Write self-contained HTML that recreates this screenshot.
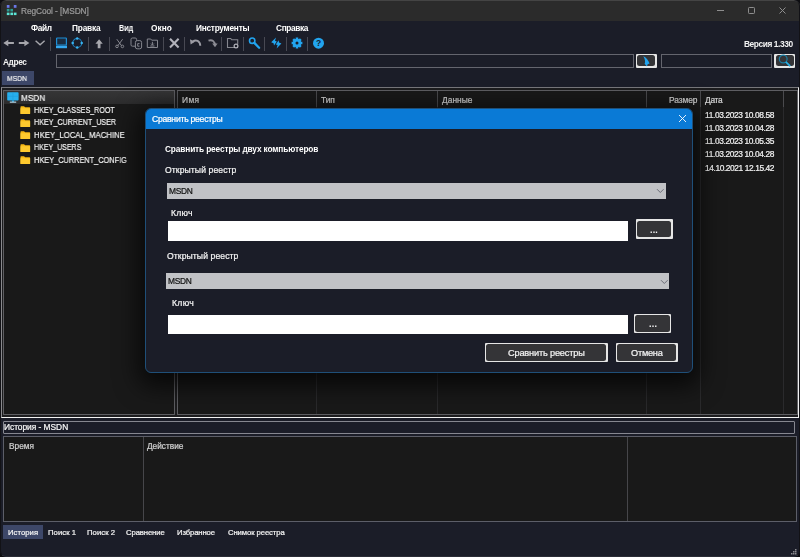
<!DOCTYPE html>
<html lang="ru">
<head>
<meta charset="utf-8">
<title>RegCool - [MSDN]</title>
<style>
*{box-sizing:border-box;margin:0;padding:0}
html,body{width:800px;height:557px;overflow:hidden}
html{background:#0d0d10}
body{font-family:"Liberation Sans","DejaVu Sans",sans-serif;font-size:9px;color:#f0f0f0;position:relative;background:#1b1d28;border-radius:6px}
.abs{position:absolute}
.t{position:absolute;white-space:nowrap;line-height:12px;height:12px;-webkit-text-stroke:0.22px currentColor;will-change:transform}
#titlebar{left:0;top:0;width:800px;height:20.700px;background:#2b2b2b;border-top:1px solid #444444;border-radius:6px 6px 0 0}
.sep{position:absolute;top:36.500px;width:1.200px;height:14.500px;background:#484953}
.inp{position:absolute;border:1px solid #64656e;background:#1b1d28}
.pane{position:absolute;background:#191919}
.vl{position:absolute;width:1px}
.fold{position:absolute;width:10.800px;height:8.200px}
.btn{position:absolute;background:#e6e6e6;border-radius:1px;padding:1.400px}
.btn i{display:block;width:100%;height:100%;background:#343437;border-radius:2.500px}
</style>
</head>
<body>
<!-- title bar -->
<div class="abs" style="left:0;top:0;width:800px;height:557px;border:1px solid #121216;border-top:none;border-bottom-color:#2a2c36;border-radius:6px;pointer-events:none;z-index:5"></div>
<div id="titlebar" class="abs"></div>
<svg class="abs" style="left:6px;top:4px" width="12" height="12" viewBox="0 0 12 12">
 <rect x="0.800" y="1" width="2.700" height="2.800" fill="#6a78e6"/>
 <rect x="7.800" y="1" width="2.700" height="2.800" fill="#6a78e6"/>
 <rect x="0.800" y="4.900" width="2.700" height="2.600" fill="#2c9c92"/>
 <rect x="4.400" y="4.900" width="2.600" height="2.600" fill="#2c9c92"/>
 <rect x="0.800" y="8.600" width="2.700" height="2.500" fill="#5ce6d6"/>
 <rect x="4.400" y="8.600" width="2.600" height="2.500" fill="#5ce6d6"/>
 <rect x="7.800" y="8.600" width="2.700" height="2.500" fill="#5ce6d6"/>
</svg>
<svg class="abs" style="left:690px;top:0" width="110" height="22" viewBox="0 0 110 22">
 <path d="M27 10.5h7" stroke="#8e8e8e" stroke-width="1" fill="none"/>
 <rect x="58.5" y="7.5" width="6" height="6" rx="0.8" stroke="#8e8e8e" stroke-width="1" fill="none"/>
 <path d="M89.5 7.5l6 6M95.5 7.5l-6 6" stroke="#8e8e8e" stroke-width="1" fill="none"/>
</svg>

<!-- menu -->

<!-- toolbar -->
<svg class="abs" id="tb" style="left:0;top:36px" width="340" height="17" viewBox="0 0 340 17">
 <g fill="#a6a6ac">
  <path d="M3.300 7l5-3.200v2.100h5.600v2.200h-5.600v2.100z"/>
  <path d="M29.400 7l-5-3.200v2.100h-5.600v2.200h5.600v2.100z"/>
 </g>
 <path d="M35.600 4.700l4.500 4 4.500-4" stroke="#a6a6ac" stroke-width="1.400" fill="none"/>
 <rect x="56.600" y="2" width="9.800" height="7" rx="0.600" stroke="#1d8ed6" stroke-width="1.200" fill="#1b2c40"/>
 <rect x="56" y="9.700" width="11" height="2.500" fill="#34a8f0"/>
 <circle cx="77.200" cy="7" r="4.500" stroke="#1c80c0" stroke-width="1.100" fill="none"/>
 <g fill="#38b4f2"><circle cx="77.200" cy="2.500" r="1.250"/><circle cx="77.200" cy="11.500" r="1.250"/><circle cx="72.700" cy="7" r="1.250"/><circle cx="81.700" cy="7" r="1.250"/></g>
 <path d="M99.100 3.200l3.700 4.600h-2.300v4.400h-2.800v-4.400h-2.300z" fill="#a6a6ac"/>
 <g stroke="#85868e" stroke-width="1" fill="none">
  <path d="M116.800 3.200l4.800 6.600M122.600 3.200l-4.800 6.600"/>
  <circle cx="117" cy="10.400" r="1.300"/><circle cx="122.400" cy="10.400" r="1.300"/>
 </g>
 <g stroke="#85868e" stroke-width="1" fill="none">
  <rect x="131" y="2" width="5.600" height="8.200" rx="1.400"/>
  <rect x="135.400" y="4.600" width="6.200" height="8.200" rx="1.800" fill="#1b1d28"/>
  <path d="M139.500 7.600h-1.800v2.600h1.800"/>
 </g>
 <g stroke="#85868e" stroke-width="1" fill="none">
  <path d="M147.300 3h3.400l1 1.200h5.800v7.300h-10.200z"/>
  <path d="M152.400 5.800v3M151 7.600l1.400 1.400 1.400-1.400M150.300 10h4.200"/>
 </g>
 <path d="M170 2.800l8.600 8.600M178.600 2.800l-8.600 8.600" stroke="#b2b2ba" stroke-width="2.100" fill="none"/>
 <path d="M192.500 5.800c3.500-2.600 7.600-1 7.800 4" stroke="#9c9ca4" stroke-width="1.900" fill="none"/>
 <path d="M190 3.200l0.600 5.200 4.300-2.600z" fill="#9c9ca4"/>
 <path d="M208.500 4.600c4-1.400 6.600 1.200 6.400 4.800" stroke="#8c8c94" stroke-width="1.900" fill="none"/>
 <path d="M217.600 7.400l-2.600 3.800-2.800-3.600z" fill="#8c8c94"/>
 <g stroke="#85868e" stroke-width="1.100" fill="none">
  <path d="M234 11.500h-6.500v-9h3.200l1 1.300h6v4.400"/>
 </g>
 <circle cx="236" cy="10" r="1.900" stroke="#b4b4bc" stroke-width="1.200" fill="none"/>
 <g stroke="#22a4ee" fill="none">
  <circle cx="252.200" cy="4.700" r="2.700" stroke-width="1.600"/>
  <path d="M254.300 6.900l4.800 4.800" stroke-width="2.300" stroke-linecap="round"/>
 </g>
 <g fill="#22a4ee">
  <path d="M276 1.400L271.200 6.200L273.600 7.200L274 9.600L276.800 5.400L275 4.800z"/>
  <path d="M276.600 12.400L281.400 7.400L279 6.600L278.600 4.200L275.800 8.400L277.600 9z"/>
 </g>
 <g>
  <circle cx="297" cy="7" r="4.300" fill="#22a4ee"/>
  <g stroke="#22a4ee" stroke-width="2.500">
   <path d="M297 1.600v10.800M291.600 7h10.800M293.200 3.200l7.600 7.600M300.800 3.200l-7.600 7.600"/>
  </g>
  <circle cx="297" cy="7" r="1.500" fill="#1b1d28"/>
 </g>
 <circle cx="318.500" cy="7.200" r="5.500" fill="#22a4ee"/>
 <text x="318.500" y="10.400" font-family="Liberation Sans, sans-serif" font-size="8.500" font-weight="bold" fill="#16202c" text-anchor="middle">?</text>
</svg>
<div class="sep" style="left:50.2px"></div>
<div class="sep" style="left:87.6px"></div>
<div class="sep" style="left:108.7px"></div>
<div class="sep" style="left:162.7px"></div>
<div class="sep" style="left:184.0px"></div>
<div class="sep" style="left:221.2px"></div>
<div class="sep" style="left:242.7px"></div>
<div class="sep" style="left:264.0px"></div>
<div class="sep" style="left:285.7px"></div>
<div class="sep" style="left:307.0px"></div>


<!-- address row -->
<div class="inp" style="left:55.500px;top:53.800px;width:578px;height:14px"></div>
<div class="btn" style="left:635.700px;top:53.800px;width:21.200px;height:14.200px;padding:1.700px"><i></i></div>
<svg class="abs" style="left:636px;top:54px" width="22" height="14" viewBox="0 0 22 14"><path d="M7.300 2.200C10 3 12.500 6.500 13.600 9.600L11.600 10.200L11 12.400L8.600 9.800C9.600 8 9 4.600 7.300 2.200z" fill="#22a4ee"/></svg>
<div class="inp" style="left:660.600px;top:53.800px;width:111.600px;height:14px"></div>
<div class="btn" style="left:774px;top:53.800px;width:21.200px;height:14.200px;padding:1.700px"><i></i></div>
<svg class="abs" style="left:774px;top:53px" width="22" height="15" viewBox="0 0 22 15"><circle cx="9.200" cy="6" r="3.900" stroke="#1b7ca2" stroke-width="1.200" fill="none"/><path d="M11.800 8.800l4.400 4.300" stroke="#28b0e4" stroke-width="1.700"/></svg>

<!-- tab -->
<div class="abs" style="left:2px;top:71px;width:32px;height:14px;background:#3d4768"></div>

<!-- main panes -->
<div class="abs" style="left:0.700px;top:87.100px;width:798.500px;height:330.500px;background:#1c1c1e;border-style:solid;border-width:1.200px 1.400px 1.400px 1.200px;border-color:#77777b #f2f2f2 #f2f2f2 #8a8a8e"></div>
<div class="pane" style="left:3px;top:90px;width:172px;height:325px;border:1px solid #5e5e62"></div>
<div class="pane" style="left:176.500px;top:90px;width:621px;height:325px;border:1px solid #5e5e62"></div>
<!-- tree -->
<div class="abs" style="left:4px;top:91.300px;width:170px;height:12.700px;background:linear-gradient(#353536,#2c2c2d)"></div>
<svg class="abs" style="left:6.600px;top:92.300px" width="12" height="11" viewBox="0 0 12 11"><rect x="0.200" y="0.200" width="11.400" height="8.300" rx="0.800" fill="#27b0ee"/><path d="M5.900 0.200v8.300M0.200 4.300h11.400" stroke="#1e9bd8" stroke-width="0.500"/><rect x="4.900" y="8.500" width="2.200" height="1.300" fill="#27b0ee"/><rect x="2.800" y="9.600" width="6.400" height="1.100" fill="#bfe4f6"/></svg>
<svg width="0" height="0" style="position:absolute"><defs>
 <symbol id="fold" viewBox="0 0 11 9"><path d="M0.800 0.300h3.200l1.200 1.200h4.800a0.700 0.700 0 0 1 0.700 0.700v6a0.700 0.700 0 0 1-0.700 0.700h-9.200a0.700 0.700 0 0 1-0.700-0.700v-7.200a0.700 0.700 0 0 1 0.700-0.700z" fill="#f6b816"/><path d="M0.100 2.600h10.600v5.600a0.700 0.700 0 0 1-0.700 0.700h-9.200a0.700 0.700 0 0 1-0.700-0.700z" fill="#fdc92e"/></symbol>
</defs></svg>
<svg class="fold" style="left:20.200px;top:106.4px"><use href="#fold"/></svg>
<svg class="fold" style="left:20.200px;top:118.8px"><use href="#fold"/></svg>
<svg class="fold" style="left:20.200px;top:131.2px"><use href="#fold"/></svg>
<svg class="fold" style="left:20.200px;top:143.6px"><use href="#fold"/></svg>
<svg class="fold" style="left:20.200px;top:156.0px"><use href="#fold"/></svg>

<!-- list header -->
<div class="vl" style="left:177px;top:91px;height:16px;background:#55565a"></div>
<div class="vl" style="left:316px;top:91px;height:323px;background:#2a2a2c"></div>
<div class="vl" style="left:437px;top:91px;height:323px;background:#2a2a2c"></div>
<div class="vl" style="left:645.500px;top:91px;height:323px;background:#2a2a2c"></div>
<div class="vl" style="left:700.300px;top:91px;height:323px;background:#2a2a2c"></div>
<div class="vl" style="left:783.200px;top:91px;height:323px;background:#2a2a2c"></div>
<div class="vl" style="left:316px;top:91px;height:16px;background:#4a4a4d"></div>
<div class="vl" style="left:437px;top:91px;height:16px;background:#4a4a4d"></div>
<div class="vl" style="left:645.500px;top:91px;height:16px;background:#4a4a4d"></div>
<div class="vl" style="left:700.300px;top:91px;height:16px;background:#4a4a4d"></div>
<div class="vl" style="left:783.200px;top:91px;height:16px;background:#4a4a4d"></div>

<!-- history -->
<div class="abs" style="left:3px;top:420.700px;width:792.300px;height:13.800px;border:1px solid #868790;background:#1b1d28;border-radius:1px"></div>
<div class="pane" style="left:3px;top:436.300px;width:794.300px;height:85.700px;border:1px solid #5c5e68"></div>
<div class="vl" style="left:142.500px;top:437px;height:84px;background:#46464a"></div>
<div class="vl" style="left:627px;top:437px;height:84px;background:#46464a"></div>

<!-- bottom tabs -->
<div class="abs" style="left:3.300px;top:524.800px;width:39.600px;height:13.800px;background:#3d4768"></div>
<svg class="abs" style="left:790px;top:548px" width="8" height="8" viewBox="0 0 8 8" fill="#8a8a8e"><rect x="5" y="1" width="1.500" height="1.500"/><rect x="3" y="3" width="1.500" height="1.500"/><rect x="5" y="3" width="1.500" height="1.500"/><rect x="1" y="5" width="1.500" height="1.500"/><rect x="3" y="5" width="1.500" height="1.500"/><rect x="5" y="5" width="1.500" height="1.500"/></svg>

<div class="t" style="left:20.9px;top:4.7px;font-size:8.3px;color:#9a9a9a;letter-spacing:-0.06px">RegCool - [MSDN]</div>
<div class="t" style="left:30.9px;top:22.3px;font-size:8.3px;color:#ffffff;font-weight:bold;-webkit-text-stroke:0;letter-spacing:-0.34px">Файл</div>
<div class="t" style="left:71.6px;top:22.3px;font-size:8.3px;color:#ffffff;font-weight:bold;-webkit-text-stroke:0;letter-spacing:-0.20px">Правка</div>
<div class="t" style="left:119.1px;top:22.3px;font-size:8.3px;color:#ffffff;font-weight:bold;-webkit-text-stroke:0;transform:scaleX(0.874);transform-origin:0 0">Вид</div>
<div class="t" style="left:151.3px;top:22.3px;font-size:8.3px;color:#ffffff;font-weight:bold;-webkit-text-stroke:0;letter-spacing:0.03px">Окно</div>
<div class="t" style="left:196.3px;top:22.3px;font-size:8.3px;color:#ffffff;font-weight:bold;-webkit-text-stroke:0;letter-spacing:-0.25px">Инструменты</div>
<div class="t" style="left:276.3px;top:22.3px;font-size:8.3px;color:#ffffff;font-weight:bold;-webkit-text-stroke:0;letter-spacing:-0.35px">Справка</div>
<div class="t" style="left:744.4px;top:37.8px;font-size:8.4px;color:#f2f2f2;font-weight:bold;-webkit-text-stroke:0;letter-spacing:-0.43px">Версия 1.330</div>
<div class="t" style="left:3.2px;top:55.6px;font-size:8.3px;color:#f2f2f2;font-weight:bold;-webkit-text-stroke:0;letter-spacing:-0.37px">Адрес</div>
<div class="t" style="left:7.3px;top:72.9px;font-size:7.7px;color:#f2f2f2;transform:scaleX(0.888);transform-origin:0 0">MSDN</div>
<div class="t" style="left:21.4px;top:91.9px;font-size:9.2px;color:#f2f2f2;transform:scaleX(0.894);transform-origin:0 0">MSDN</div>
<div class="t" style="left:34.0px;top:103.7px;font-size:9.2px;color:#f2f2f2;transform:scaleX(0.775);transform-origin:0 0">HKEY_CLASSES_ROOT</div>
<div class="t" style="left:34.0px;top:116.1px;font-size:9.2px;color:#f2f2f2;transform:scaleX(0.776);transform-origin:0 0">HKEY_CURRENT_USER</div>
<div class="t" style="left:34.0px;top:128.5px;font-size:9.2px;color:#f2f2f2;transform:scaleX(0.843);transform-origin:0 0">HKEY_LOCAL_MACHINE</div>
<div class="t" style="left:34.0px;top:141.0px;font-size:9.2px;color:#f2f2f2;transform:scaleX(0.765);transform-origin:0 0">HKEY_USERS</div>
<div class="t" style="left:34.0px;top:153.9px;font-size:9.2px;color:#f2f2f2;transform:scaleX(0.801);transform-origin:0 0">HKEY_CURRENT_CONFIG</div>
<div class="t" style="left:182.0px;top:93.9px;font-size:8.4px;color:#d6d6d6;letter-spacing:0.36px">Имя</div>
<div class="t" style="left:320.8px;top:93.9px;font-size:8.4px;color:#d6d6d6;letter-spacing:-0.06px">Тип</div>
<div class="t" style="left:441.6px;top:93.9px;font-size:8.4px;color:#d6d6d6;letter-spacing:0.04px">Данные</div>
<div class="t" style="left:669.1px;top:93.9px;font-size:8.4px;color:#d6d6d6;letter-spacing:-0.07px">Размер</div>
<div class="t" style="left:704.9px;top:93.9px;font-size:8.4px;color:#d6d6d6;letter-spacing:-0.29px">Дата</div>
<div class="t" style="left:705.3px;top:108.9px;font-size:8.4px;color:#f2f2f2;letter-spacing:-0.38px">11.03.2023 10.08.58</div>
<div class="t" style="left:705.3px;top:122.1px;font-size:8.4px;color:#f2f2f2;letter-spacing:-0.38px">11.03.2023 10.04.28</div>
<div class="t" style="left:705.3px;top:135.3px;font-size:8.4px;color:#f2f2f2;letter-spacing:-0.38px">11.03.2023 10.05.35</div>
<div class="t" style="left:705.3px;top:148.0px;font-size:8.4px;color:#f2f2f2;letter-spacing:-0.38px">11.03.2023 10.04.28</div>
<div class="t" style="left:705.3px;top:161.7px;font-size:8.4px;color:#f2f2f2;letter-spacing:-0.41px">14.10.2021 12.15.42</div>
<div class="t" style="left:4.2px;top:420.7px;font-size:8.4px;color:#f6f6f6;letter-spacing:-0.03px">История - MSDN</div>
<div class="t" style="left:8.8px;top:439.9px;font-size:8.3px;color:#d0d0d0;letter-spacing:-0.01px">Время</div>
<div class="t" style="left:147.1px;top:439.9px;font-size:8.3px;color:#d0d0d0;letter-spacing:0.00px">Действие</div>
<div class="t" style="left:7.8px;top:527.0px;font-size:7.7px;color:#f2f2f2;letter-spacing:0.04px">История</div>
<div class="t" style="left:48.3px;top:527.0px;font-size:7.7px;color:#f2f2f2;letter-spacing:0.07px">Поиск 1</div>
<div class="t" style="left:87.0px;top:527.0px;font-size:7.7px;color:#f2f2f2;letter-spacing:0.05px">Поиск 2</div>
<div class="t" style="left:126.0px;top:527.0px;font-size:7.7px;color:#f2f2f2;letter-spacing:-0.10px">Сравнение</div>
<div class="t" style="left:176.6px;top:527.0px;font-size:7.7px;color:#f2f2f2;letter-spacing:-0.12px">Избранное</div>
<div class="t" style="left:227.6px;top:527.0px;font-size:7.7px;color:#f2f2f2;letter-spacing:-0.09px">Снимок реестра</div>
<!-- dialog -->
<div class="abs" id="dlg" style="left:144.800px;top:107.500px;width:548.400px;height:265px;border-radius:6px;background:#1b1d28;border:1px solid #1f4f78;box-shadow:0 7px 24px 6px rgba(0,0,0,0.700);overflow:hidden">
 <div class="abs" style="left:-1px;top:-1px;width:550px;height:21.700px;background:#0a7ad6"></div>
</div>
<svg class="abs" style="left:678px;top:114px" width="9" height="9" viewBox="0 0 9 9"><path d="M1 1l7 7M8 1l-7 7" stroke="#fff" stroke-width="0.900" fill="none"/></svg>
<div class="abs" style="left:167.200px;top:182.800px;width:498.800px;height:15.800px;background:#c1c2c6"></div>
<svg class="abs" style="left:656px;top:188px" width="9" height="6" viewBox="0 0 9 6"><path d="M1 1.200l3.300 3.300 3.300-3.300" stroke="#6c6d78" stroke-width="1" fill="none"/></svg>
<div class="abs" style="left:167.700px;top:220.500px;width:460.500px;height:20px;background:#fff"></div>
<div class="btn" style="left:636px;top:219.300px;width:36.700px;height:19.400px"><i></i></div>
<div class="abs" style="left:166px;top:273.200px;width:503.300px;height:15.600px;background:#c1c2c6"></div>
<svg class="abs" style="left:659.500px;top:278.500px" width="9" height="6" viewBox="0 0 9 6"><path d="M1 1.200l3.300 3.300 3.300-3.300" stroke="#6c6d78" stroke-width="1" fill="none"/></svg>
<div class="abs" style="left:167.700px;top:314.600px;width:460.500px;height:19px;background:#fff"></div>
<div class="btn" style="left:634.100px;top:313.900px;width:37.300px;height:19.600px"><i></i></div>
<div class="btn" style="left:485px;top:343px;width:122.600px;height:19px"><i></i></div>
<div class="btn" style="left:616px;top:343px;width:61.600px;height:19px"><i></i></div>
<div class="t" style="left:151.6px;top:112.9px;font-size:8.6px;color:#ffffff;letter-spacing:-0.24px">Сравнить реестры</div>
<div class="t" style="left:165.3px;top:142.8px;font-size:8.3px;color:#ffffff;font-weight:bold;-webkit-text-stroke:0;letter-spacing:-0.13px">Сравнить реестры двух компьютеров</div>
<div class="t" style="left:165.3px;top:164.0px;font-size:8.6px;color:#f4f4f4;letter-spacing:0.10px">Открытый реестр</div>
<div class="t" style="left:169.0px;top:184.8px;font-size:8.4px;color:#141414;letter-spacing:-0.32px">MSDN</div>
<div class="t" style="left:170.8px;top:207.1px;font-size:8.6px;color:#f4f4f4;letter-spacing:0.26px">Ключ</div>
<div class="t" style="left:166.8px;top:250.0px;font-size:8.6px;color:#f4f4f4;letter-spacing:0.10px">Открытый реестр</div>
<div class="t" style="left:167.8px;top:274.9px;font-size:8.4px;color:#141414;letter-spacing:-0.32px">MSDN</div>
<div class="t" style="left:171.6px;top:297.1px;font-size:8.6px;color:#f4f4f4;letter-spacing:0.33px">Ключ</div>
<div class="t" style="left:508.2px;top:346.9px;font-size:9.2px;color:#f4f4f4;letter-spacing:-0.17px">Сравнить реестры</div>
<div class="t" style="left:631.2px;top:346.9px;font-size:9.2px;color:#f4f4f4;letter-spacing:-0.23px">Отмена</div>
<div class="t" style="left:650.0px;top:223.5px;font-size:9px;color:#f4f4f4;font-weight:bold;-webkit-text-stroke:0;letter-spacing:0.16px">...</div>
<div class="t" style="left:648.6px;top:317.9px;font-size:9px;color:#f4f4f4;font-weight:bold;-webkit-text-stroke:0;letter-spacing:0.23px">...</div>
</body>
</html>
